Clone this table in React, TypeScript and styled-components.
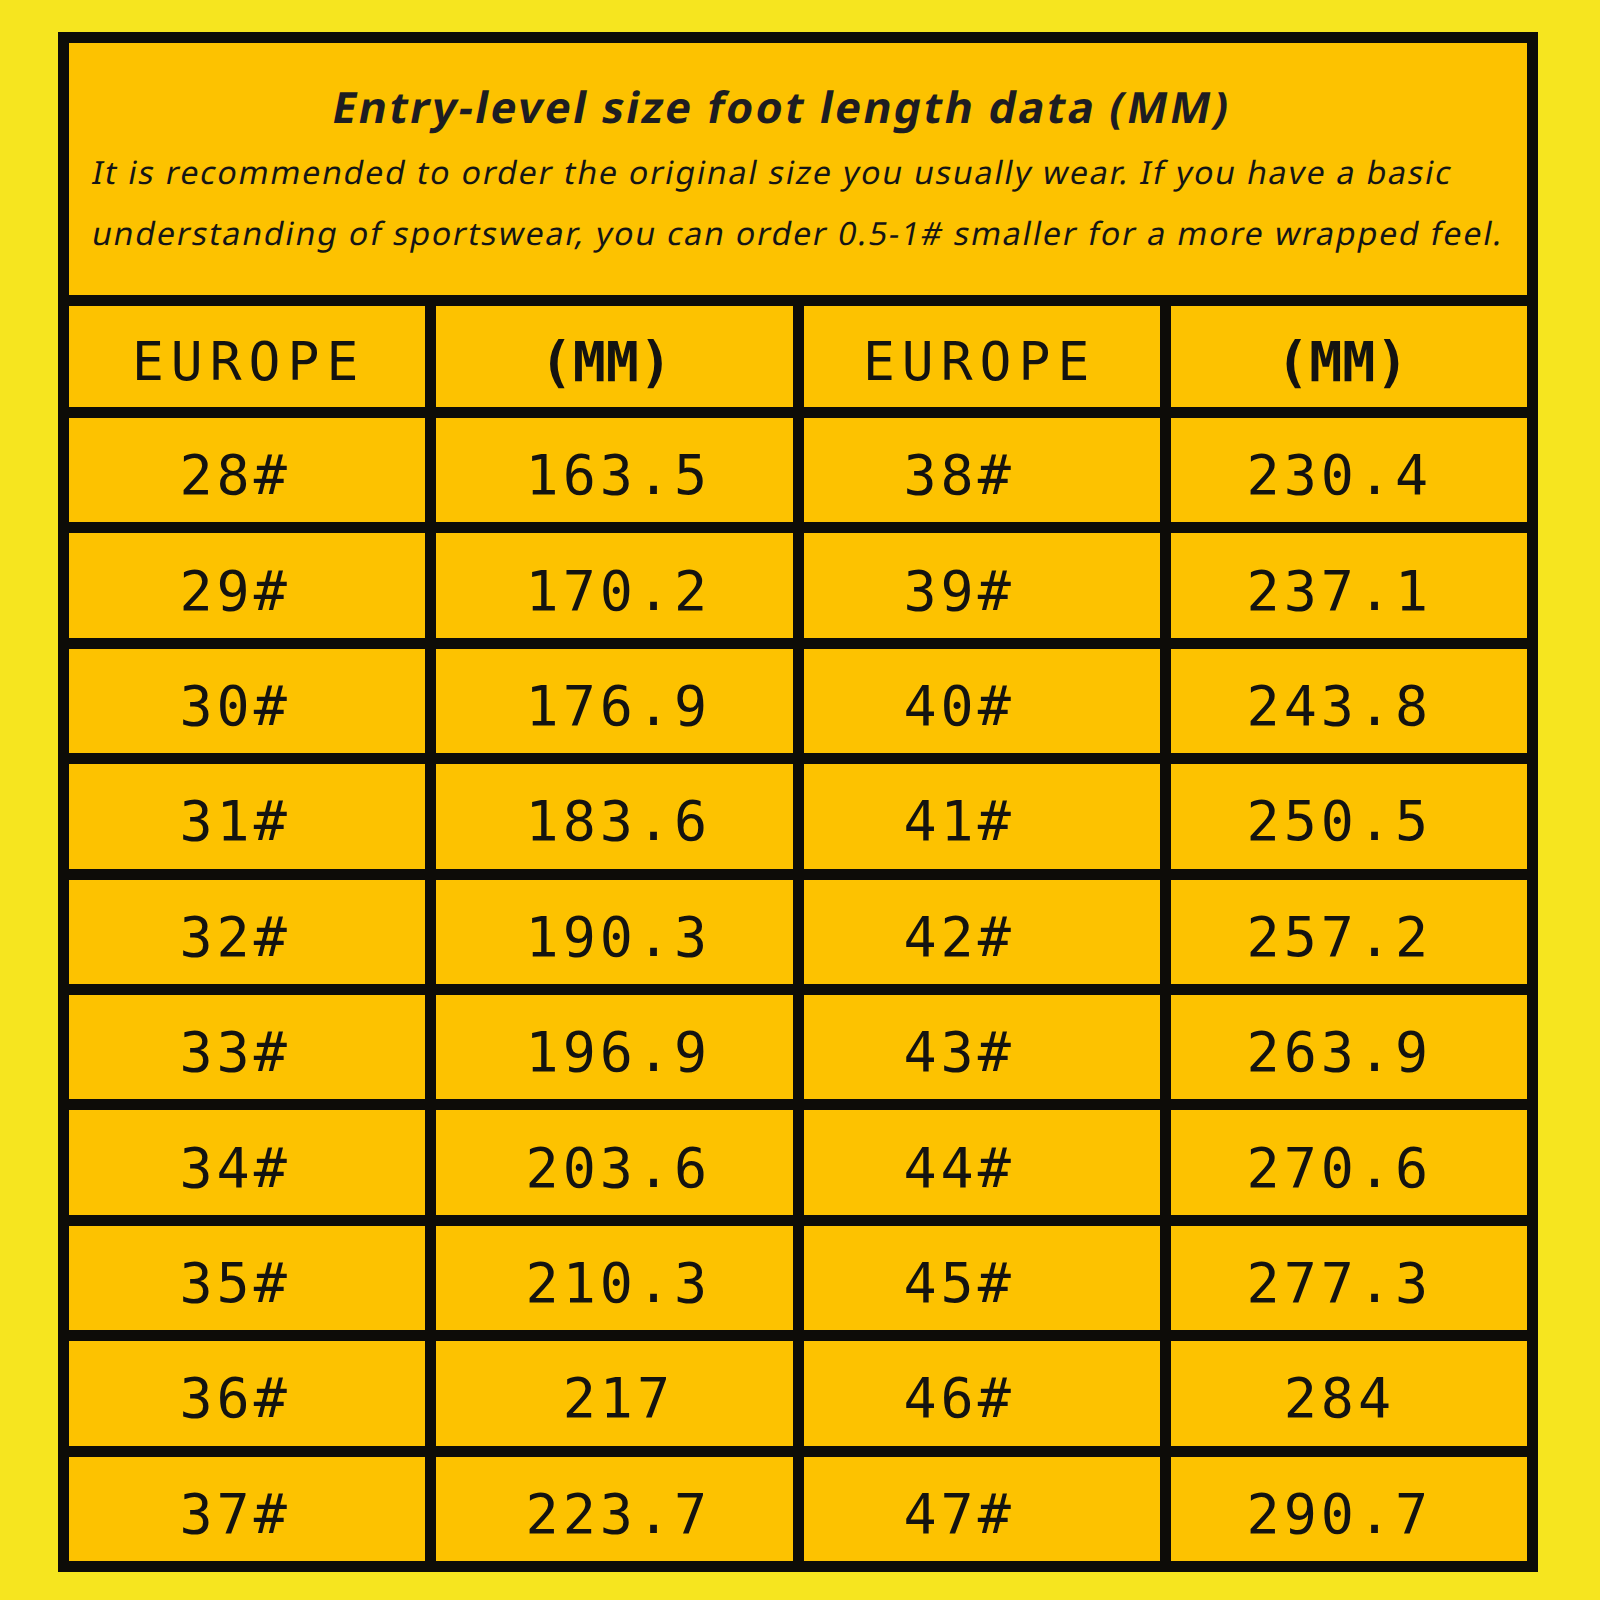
import React from 'react';
import styled, { createGlobalStyle } from 'styled-components';

const GlobalStyle = createGlobalStyle`
  html,
  body {
    margin: 0;
    padding: 0;
    background: #f6e51f;
  }
  #root {
    min-height: 1600px;
  }
`;

const Page = styled.main`
  width: 1600px;
  height: 1600px;
  box-sizing: border-box;
  padding: 32px 62px 28px 58px;
  background: #f6e51f;
`;

const Frame = styled.section`
  box-sizing: border-box;
  width: 1480px;
  height: 1540px;
  padding: 11px;
  display: grid;
  grid-template-columns: repeat(4, 1fr);
  grid-template-rows: 252px 101px repeat(10, 1fr);
  gap: 11px;
  background: #0d0c08;
`;

const Intro = styled.header`
  grid-column: 1 / -1;
  background: #fdc200;
  padding: 38px 0 0 18px;
  display: flex;
  flex-direction: column;
`;

const Title = styled.h1`
  margin: 0 32px 8px -18px;
  text-align: center;
  font-family: 'Noto Sans', 'Liberation Sans', sans-serif;
  font-size: 43px;
  line-height: 52px;
  font-weight: 700;
  color: #1d1d22;
  letter-spacing: 2.5px;

  span {
    display: inline-block;
    transform: skewX(-11deg);
  }
`;

const Note = styled.p`
  margin: 0;
  font-family: 'Noto Sans', 'Liberation Sans', sans-serif;
  font-size: 32px;
  line-height: 61px;
  font-weight: 400;
  color: #151515;
  letter-spacing: 1.85px;
  white-space: nowrap;

  span {
    display: inline-block;
    transform: skewX(-11deg);
    transform-origin: left bottom;
  }
`;

const Cell = styled.div<{ $head?: boolean; $bold?: boolean; $shift: number; $ls: number }>`
  background: #fdc200;
  display: flex;
  align-items: center;
  justify-content: center;
  box-sizing: border-box;
  padding-top: 10px;
  padding-left: ${(p) => (p.$shift > 0 ? p.$shift * 2 : 0)}px;
  padding-right: ${(p) => (p.$shift < 0 ? -p.$shift * 2 : 0)}px;
  font-family: 'DejaVu Sans Mono', 'Liberation Mono', monospace;
  font-size: ${(p) => (p.$head ? (p.$bold ? 55 : 53) : 55)}px;
  font-weight: ${(p) => (p.$bold ? 700 : 400)};
  letter-spacing: ${(p) => p.$ls}px;
  color: #141310;
  white-space: nowrap;
`;

const rows: [string, string, string, string][] = [
  ['28#', '163.5', '38#', '230.4'],
  ['29#', '170.2', '39#', '237.1'],
  ['30#', '176.9', '40#', '243.8'],
  ['31#', '183.6', '41#', '250.5'],
  ['32#', '190.3', '42#', '257.2'],
  ['33#', '196.9', '43#', '263.9'],
  ['34#', '203.6', '44#', '270.6'],
  ['35#', '210.3', '45#', '277.3'],
  ['36#', '217', '46#', '284'],
  ['37#', '223.7', '47#', '290.7'],
];

// extra centering offsets per column, read off the chart
const dataShift = [-12, 4, -22.5, -9.5];

export default function App() {
  return (
    <Page>
      <GlobalStyle />
      <Frame>
        <Intro>
          <Title>
            <span>Entry-level size foot length data (MM)</span>
          </Title>
          <Note>
            <span>
              It is recommended to order the original size you usually wear. If you have a basic
            </span>
          </Note>
          <Note>
            <span>
              understanding of sportswear, you can order 0.5-1# smaller for a more wrapped feel.
            </span>
          </Note>
        </Intro>

        <Cell $head $shift={1.5} $ls={7}>EUROPE</Cell>
        <Cell $head $bold $shift={-8.5} $ls={0}>(MM)</Cell>
        <Cell $head $shift={-2} $ls={7}>EUROPE</Cell>
        <Cell $head $bold $shift={-6.5} $ls={0}>(MM)</Cell>

        {rows.map((row) =>
          row.map((value, i) => (
            <Cell key={`${row[0]}-${i}`} $shift={dataShift[i]} $ls={4}>
              {value}
            </Cell>
          ))
        )}
      </Frame>
    </Page>
  );
}
